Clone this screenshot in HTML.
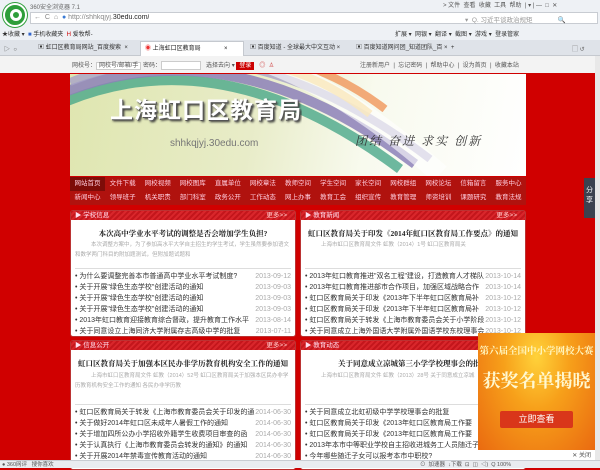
<!DOCTYPE html>
<html><head><meta charset="utf-8"><style>
*{margin:0;padding:0;box-sizing:border-box}
body{width:600px;height:468px;overflow:hidden;position:relative;background:#d00000;font-family:"Liberation Sans","Noto Sans CJK SC",sans-serif;font-size:7px;color:#333}
.a{position:absolute}
.chrome{left:0;top:0;width:600px;height:56px;background:#eef1f5}
.tb{white-space:nowrap;overflow:hidden}
.panel{background:#fff;border:1px solid #b33;border-radius:3px}
.ph{position:absolute;left:0;top:0;right:0;height:9px;background:repeating-linear-gradient(135deg,#c4161c 0 2px,#d9262b 2px 4px);color:#fde;font-size:6.5px;line-height:9px;padding-left:4px}
.ph span{position:absolute;right:8px;top:0;color:#fcc}
.tt{position:absolute;left:0;right:0;text-align:center;font-weight:bold;font-size:7.5px;color:#222;font-family:"Liberation Serif","Noto Serif CJK SC",serif}
.sm{position:absolute;left:4px;right:6px;color:#aaa;font-size:5.5px;line-height:10px;text-indent:16px}
.ls{position:absolute;left:4px;right:4px;border-top:1px solid #ddd;padding-top:2px}
.ls div{height:11px;line-height:11px;font-size:7px;color:#333;white-space:nowrap;overflow:hidden;position:relative;padding-right:44px}
.ls div b{position:absolute;right:0;top:0;font-weight:normal;color:#aaa}
.nav{left:70px;width:456px;background:#b0120e;color:#fcd;font-size:6.5px;display:flex;height:14px;line-height:14px}
.nav div{flex:1;text-align:center}
</style></head><body>
<div class="a chrome"></div>
<div class="a" style="left:3px;top:3px;width:24px;height:24px;border-radius:50%;background:#2e9e3a;border:2px solid #fff;box-shadow:0 0 0 1px #2e9e3a"><div style="position:absolute;left:5px;top:4px;width:12px;height:12px;border-radius:50%;border:3px solid #fff"></div></div>
<div class="a tb" style="left:30px;top:2px;font-size:6px;color:#666">360安全浏览器 7.1</div>
<div class="a tb" style="left:443px;top:0;font-size:6px;color:#555">&gt; 文件 &nbsp;查看 &nbsp;收藏 &nbsp;工具 &nbsp;帮助 &nbsp;| ▾ | — &nbsp;□ &nbsp;✕</div>
<div class="a" style="left:30px;top:12px;width:568px;height:12px;background:#fff;border:1px solid #c8ccd2"></div>
<div class="a tb" style="left:34px;top:14px;font-size:7px;color:#888">← &nbsp;C &nbsp;⌂ &nbsp;<span style="color:#3a7bd5">●</span> http://shhkqjyj.<span style="color:#222">30edu.com/</span></div>
<div class="a tb" style="left:465px;top:14px;font-size:6.5px;color:#999">▾ &nbsp;Q. 习近平谈政治规矩 &nbsp; &nbsp; &nbsp; &nbsp; &nbsp; &nbsp; &nbsp;🔍</div>
<div class="a tb" style="left:2px;top:29px;font-size:6px;color:#333">★收藏 ▾ &nbsp;<span style="color:#36c">■</span> 手机收藏夹 &nbsp;<span style="color:#c00">H</span> 爱牧帮-</div>
<div class="a tb" style="left:395px;top:29px;font-size:6px;color:#333">扩展 ▾ &nbsp;网银 ▾ &nbsp;翻译 ▾ &nbsp;截图 ▾ &nbsp;游戏 ▾ &nbsp;登录管家</div>
<div class="a" style="left:0;top:40px;width:600px;height:16px;background:#dfe3e9;border-bottom:1px solid #c5c9cf"></div>
<div class="a tb" style="left:4px;top:44px;font-size:6px;color:#555">▷ &nbsp;○</div>
<div class="a tb" style="left:38px;top:41px;width:100px;height:15px;line-height:15px;font-size:6px;color:#333">▣ 虹口区教育局网站_百度搜索 &nbsp;×</div>
<div class="a tb" style="left:140px;top:41px;width:104px;height:15px;line-height:15px;font-size:6px;color:#222;background:#fff;border:1px solid #c5c9cf;border-bottom:none;padding-left:4px"><span style="color:#e33">◉</span> 上海虹口区教育局 &nbsp; &nbsp; &nbsp; &nbsp; &nbsp; &nbsp; &nbsp;×</div>
<div class="a tb" style="left:250px;top:41px;width:100px;height:15px;line-height:15px;font-size:6px;color:#333">▣ 百度知道 - 全球最大中文互动 ×</div>
<div class="a tb" style="left:356px;top:41px;width:110px;height:15px;line-height:15px;font-size:6px;color:#333">▣ 百度知道网问团_知道团队_百 × &nbsp;+</div>
<div class="a tb" style="left:572px;top:44px;font-size:6px;color:#666">▢ ↺</div>
<div class="a" style="left:0;top:56px;width:595px;height:17px;background:#f3f3f3"></div>
<div class="a tb" style="left:72px;top:60px;font-size:6px;color:#555">网校号：<span style="border:1px solid #ccc;background:#fff;padding:0 2px">网校号/邮箱/手</span> 密码：<span style="display:inline-block;width:40px;height:9px;border:1px solid #ccc;background:#fff;vertical-align:middle"></span> &nbsp; 选择去向 ▾ <span style="background:#c00;color:#fff;padding:1px 3px">登录</span> &nbsp; <span style="color:#c33">◎</span> &nbsp;<span style="color:#c33">♙</span></div>
<div class="a tb" style="left:360px;top:60px;font-size:6px;color:#555">注册新用户 &nbsp;| &nbsp;忘记密码 &nbsp;| &nbsp;帮助中心 &nbsp;| &nbsp;设为首页 &nbsp;| &nbsp;收藏本站</div>
<div class="a" style="left:595px;top:56px;width:5px;height:404px;background:#e8e8e8"></div>
<!-- banner -->
<div class="a" style="left:70px;top:74px;width:456px;height:102px;background:linear-gradient(100deg,#dfe6b0 0%,#e8ecc8 40%,#f8faee 65%,#fff 100%);overflow:hidden">
<svg class="a" style="left:0;top:0" width="456" height="102" viewBox="0 0 456 102">
<g fill="none" stroke-linecap="butt">
<path d="M-10,30 Q150,-40 330,95" stroke="#4aa88a" stroke-width="10" opacity=".8"/>
<path d="M-10,20 Q160,-50 345,90" stroke="#8c80b8" stroke-width="10" opacity=".85"/>
<path d="M0,8 Q170,-60 360,85" stroke="#a7a3c8" stroke-width="8" opacity=".8"/>
<path d="M60,-4 Q200,-40 300,40" stroke="#f2c65a" stroke-width="8" opacity=".8"/>
<path d="M80,-10 Q210,-45 315,35" stroke="#f0965a" stroke-width="8" opacity=".8"/>
<path d="M200,-10 Q280,20 370,100" stroke="#ffffff" stroke-width="20" opacity=".6"/>
</g>
</svg>
<div class="a tb" style="left:40px;top:17px;font-size:23px;font-weight:bold;color:#fff;text-shadow:1px 1px 0 #555,2px 2px 2px #333;letter-spacing:1px">上海虹口区教育局</div>
<div class="a tb" style="left:100px;top:64px;font-size:10px;color:#777">shhkqjyj.30edu.com</div>
<div class="a tb" style="left:285px;top:58px;font-size:12px;color:#333;font-style:italic;font-family:'Noto Serif CJK SC',serif;letter-spacing:2px">团结 奋进 求实 创新</div>
</div>
<div class="a nav" style="top:177px"><div style="background:#7d0c08">网站首页</div><div>文件下载</div><div>网校视频</div><div>网校图库</div><div>直属单位</div><div>网校章法</div><div>教师空间</div><div>学生空间</div><div>家长空间</div><div>网校群组</div><div>网校论坛</div><div>信箱留言</div><div>服务中心</div></div>
<div class="a nav" style="top:191px"><div>新闻中心</div><div>领导班子</div><div>机关职责</div><div>部门科室</div><div>政务公开</div><div>工作动态</div><div>网上办事</div><div>教育工会</div><div>组织宣传</div><div>教育管理</div><div>师资培训</div><div>课题研究</div><div>教育法规</div></div>
<div class="a" style="left:584px;top:178px;width:11px;height:40px;background:#3b4250;color:#fff;font-size:7px;line-height:10px;text-align:center;padding-top:8px">分<br>享</div>
<!-- panels -->
<div class="a panel" style="left:70px;top:210px;width:226px;height:127px">
<div class="ph">▶ 学校信息<span>更多&gt;&gt;</span></div>
<div class="tt" style="top:17px">本次高中学业水平考试的调整是否会增加学生负担?</div>
<div class="sm" style="top:29px">本次调整方案中，为了参加高水平大学自主招生的学生考试，学生虽然要参加语文和数学两门科目的附加题测试，但附加题试题和</div>
<div class="ls" style="top:57px"><div>• 为什么要调整完善本市普通高中学业水平考试制度?<b>2013-09-12</b></div><div>• 关于开展"绿色生态学校"创建活动的通知<b>2013-09-03</b></div><div>• 关于开展"绿色生态学校"创建活动的通知<b>2013-09-03</b></div><div>• 关于开展"绿色生态学校"创建活动的通知<b>2013-09-03</b></div><div>• 2013年虹口教育迎接教育综合督政，提升教育工作水平<b>2013-08-14</b></div><div>• 关于同意设立上海同济大学附属存志高级中学的批复<b>2013-07-11</b></div></div>
</div>
<div class="a panel" style="left:300px;top:210px;width:226px;height:127px">
<div class="ph">▶ 教育新闻<span>更多&gt;&gt;</span></div>
<div class="tt" style="top:17px">虹口区教育局关于印发《2014年虹口区教育局工作要点》的通知</div>
<div class="sm" style="top:29px">上海市虹口区教育局文件 虹教（2014）1号 虹口区教育局关</div>
<div class="ls" style="top:57px"><div>• 2013年虹口教育推进"双名工程"建设，打造教育人才梯队<b>2013-10-14</b></div><div>• 2013年虹口教育推进部市合作项目，加强区域战略合作<b>2013-10-14</b></div><div>• 虹口区教育局关于印发《2013年下半年虹口区教育局补<b>2013-10-12</b></div><div>• 虹口区教育局关于印发《2013年下半年虹口区教育局补<b>2013-10-12</b></div><div>• 虹口区教育局关于转发《上海市教育委员会关于小学阶段<b>2013-10-12</b></div><div>• 关于同意成立上海外国语大学附属外国语学校东校理事会<b>2013-10-12</b></div></div>
</div>
<div class="a panel" style="left:70px;top:340px;width:226px;height:130px">
<div class="ph">▶ 信息公开<span>更多&gt;&gt;</span></div>
<div class="tt" style="top:17px">虹口区教育局关于加强本区民办非学历教育机构安全工作的通知</div>
<div class="sm" style="top:30px">上海市虹口区教育局文件 虹教（2014）52号 虹口区教育局关于加强本区民办非学历教育机构安全工作的通知 各民办非学历教</div>
<div class="ls" style="top:63px"><div>• 虹口区教育局关于转发《上海市教育委员会关于印发的通<b>2014-06-30</b></div><div>• 关于做好2014年虹口区未成年人暑假工作的通知<b>2014-06-30</b></div><div>• 关于增加四所公办小学招收外籍学生收费项目审查的函<b>2014-06-30</b></div><div>• 关于认真执行《上海市教育委员会转发的通知》的通知<b>2014-06-30</b></div><div>• 关于开展2014年禁毒宣传教育活动的通知<b>2014-06-30</b></div></div>
</div>
<div class="a panel" style="left:300px;top:340px;width:226px;height:130px">
<div class="ph">▶ 教育动态<span>更多&gt;&gt;</span></div>
<div class="tt" style="top:17px">关于同意成立凉城第三小学学校理事会的批复</div>
<div class="sm" style="top:30px">上海市虹口区教育局文件 虹教（2013）28号 关于同意成立凉城</div>
<div class="ls" style="top:63px"><div>• 关于同意成立北虹初级中学学校理事会的批复</div><div>• 虹口区教育局关于印发《2013年虹口区教育局工作要</div><div>• 虹口区教育局关于印发《2013年虹口区教育局工作要</div><div>• 2013年本市中等职业学校自主招收进城务工人员随迁子</div><div>• 今年哪些随迁子女可以报考本市中职校?</div></div>
</div>
<!-- ad -->
<div class="a" style="left:478px;top:333px;width:117px;height:117px;background:radial-gradient(ellipse at 50% 20%,#ffd23a 0%,#f7a01a 40%,#ea6a10 100%)">
<div class="a tb" style="left:0;right:0;top:10px;text-align:center;font-size:9.5px;color:#fff6c0;font-family:'Noto Serif CJK SC',serif;font-weight:bold">第六届全国中小学网校大赛</div>
<div class="a tb" style="left:0;right:0;top:34px;text-align:center;font-size:18px;color:#fff8d0;font-family:'Noto Serif CJK SC',serif;font-weight:bold">获奖名单揭晓</div>
<div class="a" style="left:22px;top:78px;width:73px;height:17px;background:#d9361a;border-radius:2px;color:#fff;font-size:9px;line-height:17px;text-align:center">立即查看</div>
</div>
<div class="a tb" style="left:478px;top:450px;width:117px;height:10px;background:#fff;font-size:6px;color:#555;text-align:right;padding-right:4px">✕ 关闭</div>
<div class="a" style="left:0;top:460px;width:600px;height:8px;background:#e9ecf0;border-top:1px solid #c8ccd2"></div>
<div class="a tb" style="left:2px;top:460px;font-size:5.5px;color:#555">● 360网评 &nbsp; 搜你喜欢</div>
<div class="a tb" style="left:420px;top:460px;font-size:5.5px;color:#555">⊙ &nbsp;加速器 &nbsp;↓下载 &nbsp;⊡ &nbsp;◫ &nbsp;◁) &nbsp;Q 100%</div>
</body></html>
